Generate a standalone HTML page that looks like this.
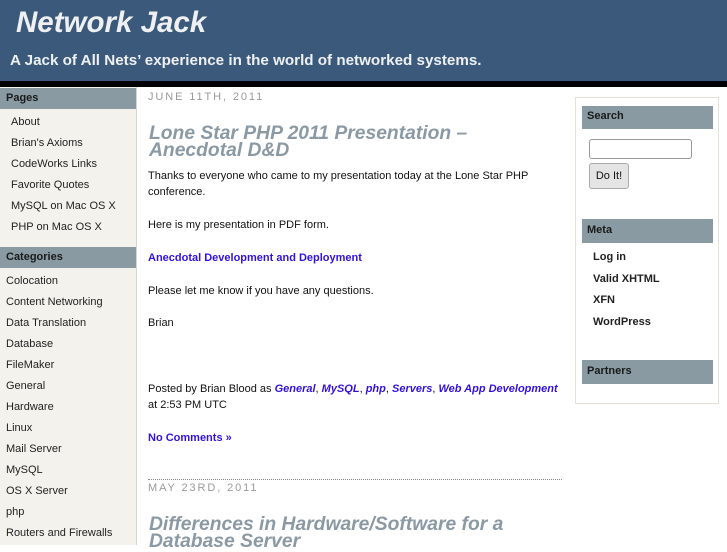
<!DOCTYPE html>
<html><head><meta charset="utf-8"><style>
*{margin:0;padding:0;box-sizing:border-box}
body{width:727px;height:545px;overflow:hidden;background:#fff;font-family:"Liberation Sans",sans-serif;position:relative;font-size:11px;color:#111}
.a{position:absolute;white-space:nowrap}
#hd{position:absolute;left:0;top:0;width:727px;height:81px;background:#3b5a7b}
#bar{position:absolute;left:0;top:81px;width:727px;height:6px;background:#000}
#ls{position:absolute;left:0;top:87px;width:137px;height:458px;background:#f3f2ec;border-right:1px solid #d8d6cc}
.h{position:absolute;background:#899aa2;font-weight:bold;color:#1a1a1a;font-size:11px;padding-left:6px}
.li{position:absolute;left:11px;font-size:11px;color:#222}
.ci{position:absolute;left:6px;font-size:11px;color:#222}
.t{position:absolute;left:148px;font-size:11px;color:#111;white-space:nowrap}
.lk{color:#3311dd;font-weight:bold}
.date{position:absolute;left:148px;color:#999;letter-spacing:1.9px;font-size:11px}
.ttl{position:absolute;left:149px;color:#8a99a3;font-weight:bold;font-style:italic;font-size:19.3px;line-height:17px;white-space:nowrap}
</style></head><body>
<div id="hd"></div><div id="bar"></div>
<div class="a" style="left:16px;top:6px;font-size:29.5px;font-weight:bold;font-style:italic;color:#eef0f2">Network Jack</div>
<div class="a" style="left:10px;top:52px;font-size:15.2px;font-weight:bold;color:#eef0f2">A Jack of All Nets’ experience in the world of networked systems.</div>
<div id="ls"></div>
<div class="h" style="left:0;top:88px;width:136px;height:21px;line-height:21px">Pages</div>
<div class="li" style="top:116px">About</div>
<div class="li" style="top:137px">Brian's Axioms</div>
<div class="li" style="top:158px">CodeWorks Links</div>
<div class="li" style="top:179px">Favorite Quotes</div>
<div class="li" style="top:200px">MySQL on Mac OS X</div>
<div class="li" style="top:221px">PHP on Mac OS X</div>
<div class="h" style="left:0;top:247px;width:136px;height:21px;line-height:21px">Categories</div>
<div class="ci" style="top:275px">Colocation</div>
<div class="ci" style="top:296px">Content Networking</div>
<div class="ci" style="top:317px">Data Translation</div>
<div class="ci" style="top:338px">Database</div>
<div class="ci" style="top:359px">FileMaker</div>
<div class="ci" style="top:380px">General</div>
<div class="ci" style="top:401px">Hardware</div>
<div class="ci" style="top:422px">Linux</div>
<div class="ci" style="top:443px">Mail Server</div>
<div class="ci" style="top:464px">MySQL</div>
<div class="ci" style="top:485px">OS X Server</div>
<div class="ci" style="top:506px">php</div>
<div class="ci" style="top:527px">Routers and Firewalls</div>

<div class="date" style="top:91px">JUNE 11TH, 2011</div>
<div class="ttl" style="top:125px">Lone Star PHP 2011 Presentation –<br>Anecdotal D&amp;D</div>
<div class="t" style="top:170px">Thanks to everyone who came to my presentation today at the Lone Star PHP</div>
<div class="t" style="top:186px">conference.</div>
<div class="t" style="top:219px">Here is my presentation in PDF form.</div>
<div class="t lk" style="top:252px">Anecdotal Development and Deployment</div>
<div class="t" style="top:285px">Please let me know if you have any questions.</div>
<div class="t" style="top:317px">Brian</div>
<div class="t" style="top:383px">Posted by Brian Blood as <i class="lk">General</i>, <i class="lk">MySQL</i>, <i class="lk">php</i>, <i class="lk">Servers</i>, <i class="lk">Web App Development</i></div>
<div class="t" style="top:399px">at 2:53 PM UTC</div>
<div class="t lk" style="top:432px">No Comments »</div>
<div class="a" style="left:148px;top:479px;width:414px;border-top:1px dotted #888"></div>
<div class="date" style="top:482px">MAY 23RD, 2011</div>
<div class="ttl" style="top:516px">Differences in Hardware/Software for a<br>Database Server</div>

<div class="a" style="left:575px;top:97px;width:144px;height:307px;border:1px solid #e6e1d4;background:#fff"></div>
<div class="h" style="left:582px;top:106px;width:131px;height:23px;line-height:21px;padding-left:5px">Search</div>
<div class="a" style="left:589px;top:139px;width:103px;height:20px;border:1px solid #999;border-radius:3px;background:#fff"></div>
<div class="a" style="left:589px;top:163px;width:40px;height:26px;border:1px solid #aaa;border-radius:3px;background:#e4e4e4;font-size:11px;line-height:24px;text-align:center;color:#111">Do It!</div>
<div class="h" style="left:582px;top:219px;width:131px;height:24px;line-height:23px;padding-left:5px">Meta</div>
<div class="a" style="left:593px;top:251px;font-weight:bold;color:#222">Log in</div>
<div class="a" style="left:593px;top:273px;font-weight:bold;color:#222">Valid XHTML</div>
<div class="a" style="left:593px;top:294px;font-weight:bold;color:#222">XFN</div>
<div class="a" style="left:593px;top:316px;font-weight:bold;color:#222">WordPress</div>
<div class="h" style="left:582px;top:360px;width:131px;height:24px;line-height:23px;padding-left:5px">Partners</div>
</body></html>
